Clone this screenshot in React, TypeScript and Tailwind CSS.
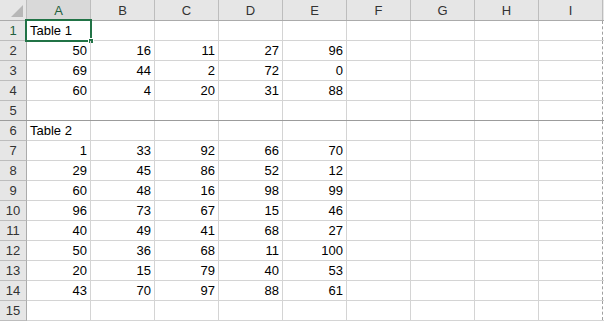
const columns = ['A', 'B', 'C', 'D', 'E', 'F', 'G', 'H', 'I'];

const rows: (string | number)[][] = [
  ['Table 1'],
  [50, 16, 11, 27, 96],
  [69, 44, 2, 72, 0],
  [60, 4, 20, 31, 88],
  [],
  ['Table 2'],
  [1, 33, 92, 66, 70],
  [29, 45, 86, 52, 12],
  [60, 48, 16, 98, 99],
  [96, 73, 67, 15, 46],
  [40, 49, 41, 68, 27],
  [50, 36, 68, 11, 100],
  [20, 15, 79, 40, 53],
  [43, 70, 97, 88, 61],
  [],
];

export default function App() {
  return (
    <div
      className="w-[604px] h-[321px] bg-white overflow-hidden text-[13px] text-black"
      style={{ fontFamily: '"Liberation Sans", Arial, sans-serif' }}
    >
      {/* Column headers */}
      <div className="flex h-[21px] bg-[#e6e6e6] border-b border-[#ababab]">
        <div className="relative w-[27px] shrink-0 border-r border-[#bdbdbd]">
          <div className="absolute right-[3px] bottom-[3px] w-0 h-0 border-l-[12px] border-l-transparent border-b-[12px] border-b-[#b7b7b7]" />
        </div>
        {columns.map((col, i) => (
          <div
            key={col}
            className={`w-[64px] shrink-0 flex items-center justify-center pt-[1px] border-r border-[#bdbdbd] ${
              i === 0 ? 'bg-[#d9d9d9] text-[#1f5f3c]' : 'text-[#333]'
            }`}
          >
            {col}
          </div>
        ))}
      </div>

      {/* Body */}
      {rows.map((row, r) => {
        const isText = typeof row[0] === 'string';
        return (
          <div
            key={r}
            className={`flex h-[20px] border-b ${r === 4 ? 'border-[#9c9c9c]' : 'border-[#d4d4d4]'}`}
          >
            <div
              className={`w-[27px] shrink-0 flex items-center justify-center bg-[#e6e6e6] border-r border-[#ababab] ${
                r === 0 ? 'bg-[#d9d9d9] text-[#1f5f3c]' : 'text-[#333]'
              } ${r === 4 ? '' : 'border-b border-b-[#bdbdbd] -mb-px'}`}
            >
              {r + 1}
            </div>
            {columns.map((col, c) => {
              const value = row[c];
              const last = c === columns.length - 1;
              return (
                <div
                  key={col}
                  className={`relative w-[64px] shrink-0 flex items-end pb-[1px] leading-[16px] ${
                    last ? 'border-r border-dashed border-[#a0a0a0]' : 'border-r border-[#d4d4d4]'
                  } ${isText ? 'justify-start pl-[3px] whitespace-nowrap' : 'justify-end pr-[3px]'}`}
                >
                  {value !== undefined ? value : ''}
                  {r === 0 && c === 0 && (
                    <div className="absolute -top-[2px] -left-[2px] -right-[2px] -bottom-[2px] border-2 border-[#217346] pointer-events-none">
                      <div className="absolute -right-[4px] -bottom-[4px] w-[6px] h-[6px] bg-[#217346] border border-white" />
                    </div>
                  )}
                </div>
              );
            })}
          </div>
        );
      })}
    </div>
  );
}
